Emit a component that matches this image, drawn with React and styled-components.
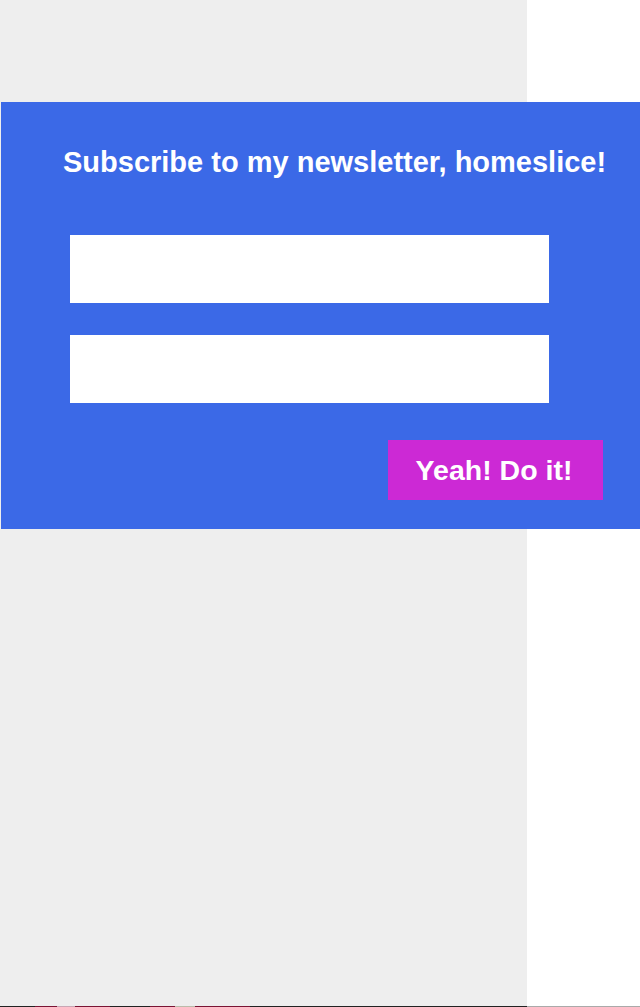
import React from 'react'
import styled, {createGlobalStyle} from 'styled-components'

const Colors = {
  PAGE: '#eeeeee',
  SIDE: '#ffffff',
  PANEL: '#3b69e7',
  BUTTON: '#cc29d5',
  WHITE: '#ffffff',
}

const GlobalStyle = createGlobalStyle`
  html, body {
    margin: 0;
    padding: 0;
    background: ${Colors.SIDE};
    overflow: hidden;
  }

  body {
    font-family: 'Liberation Sans', Arial, sans-serif;
  }
`

export default function App() {
  return (
    <>
      <GlobalStyle />
      <Page>
        <Main>
          <Panel>
            <Title>Subscribe to my newsletter, homeslice!</Title>
            <Form onSubmit={(e) => e.preventDefault()}>
              <Field type="text" aria-label="Name" />
              <Field type="email" aria-label="Email" />
              <Actions>
                <Button type="submit">Yeah! Do it!</Button>
              </Actions>
            </Form>
          </Panel>
        </Main>
        <Side />
      </Page>
      <Strip>
        <StripDark />
        <StripLight />
      </Strip>
    </>
  )
}

const Page = styled.div`
  display: flex;
  height: 1006px;
`

const Main = styled.main`
  width: 527px;
  flex: none;
  box-sizing: border-box;
  padding: 102px 0 0 1px;
  background: ${Colors.PAGE};
`

const Side = styled.aside`
  flex: 1;
  background: ${Colors.SIDE};
`

const Panel = styled.section`
  position: relative;
  z-index: 1;
  width: 639px;
  box-sizing: border-box;
  padding: 46px 37px 29px 62px;
  background: ${Colors.PANEL};
`

const Title = styled.h2`
  margin: 0;
  color: ${Colors.WHITE};
  font-size: 29px;
  line-height: 29px;
  font-weight: bold;
  white-space: nowrap;
`

const Form = styled.form`
  display: flex;
  flex-direction: column;
  gap: 32px;
  margin-top: 58px;
  padding-left: 7px;
`

const Field = styled.input`
  display: block;
  width: 479px;
  height: 68px;
  box-sizing: border-box;
  margin: 0;
  border: none;
  outline: none;
  background: ${Colors.WHITE};
`

const Actions = styled.div`
  display: flex;
  justify-content: flex-end;
  margin-top: 5px;
`

const Button = styled.button`
  width: 215px;
  height: 60px;
  margin: 0;
  padding: 0 3px 0 0;
  border: none;
  background: ${Colors.BUTTON};
  color: ${Colors.WHITE};
  font-family: 'Liberation Sans', Arial, sans-serif;
  font-size: 28.5px;
  font-weight: bold;
  cursor: pointer;
`

const Strip = styled.div`
  display: flex;
  height: 1px;
`

const StripDark = styled.div`
  width: 527px;
  background: linear-gradient(
    90deg,
    #222 0 35px,
    #7a1434 35px 57px,
    #c9a6b4 57px 75px,
    #7a1434 75px 110px,
    #222 110px 150px,
    #7a1434 150px 175px,
    #bba 175px 195px,
    #7a1434 195px 250px,
    #222 250px 527px
  );
`

const StripLight = styled.div`
  flex: 1;
  background: #aaaaaa;
`
